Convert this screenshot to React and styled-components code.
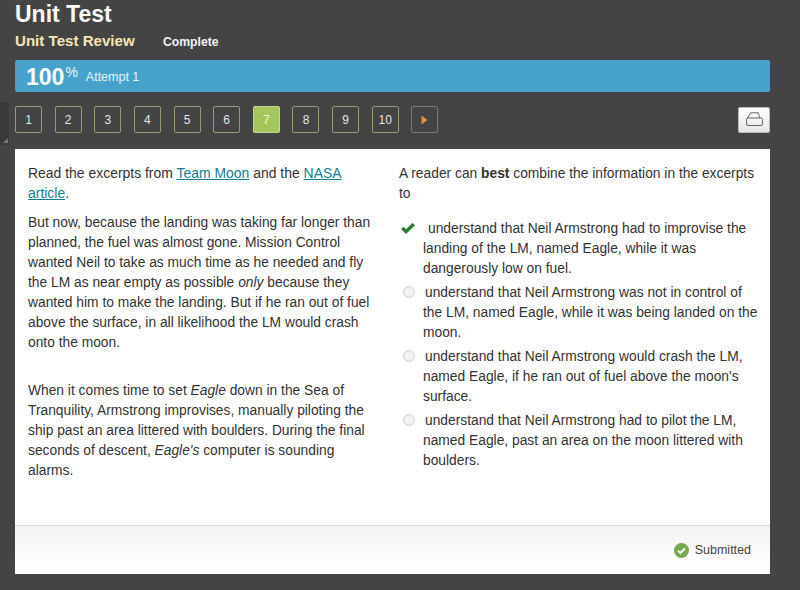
import React from "react";
import styled, { createGlobalStyle } from "styled-components";

const GlobalStyle = createGlobalStyle`
html, body {
  margin: 0;
  padding: 0;
  background: #444444;
  font-family: "Liberation Sans", Arial, sans-serif;
}
`;

const Page = styled.div`
position: relative;
width: 800px;
height: 590px;
box-sizing: border-box;
padding: 0 30px 0 15px;
overflow: hidden;
`;

const Title = styled.h1`
margin: 0;
padding-top: 1px;
height: 27px;
font-size: 23px;
line-height: 27px;
font-weight: bold;
color: #fff;
`;

const SubRow = styled.div`
display: flex;
align-items: center;
height: 27px;
margin-top: -1px;
`;

const Lesson = styled.div`
font-size: 15.1px;
font-weight: bold;
color: #f5e6b5;
width: 148px;
`;

const Status = styled.div`
font-size: 12.2px;
font-weight: bold;
color: #f2f2f2;
padding-top: 2px;
`;

const ScoreBar = styled.div`
display: flex;
align-items: center;
height: 32px;
margin-top: 6px;
padding-left: 11px;
background: #46a2ca;
border-radius: 2px;
color: #e6f3f9;
`;

const Score = styled.span`
font-size: 23px;
font-weight: bold;
color: #fff;
padding-top: 2px;
`;

const Percent = styled.span`
font-size: 14px;
position: relative;
top: -4px;
margin-left: 1px;
`;

const Attempt = styled.span`
margin-left: 8px;
font-size: 12.5px;
padding-top: 1px;
`;

const NavRow = styled.div`
display: flex;
align-items: center;
height: 27px;
margin-top: 14px;
`;

const NavButton = styled.div`
box-sizing: border-box;
display: flex;
align-items: center;
justify-content: center;
flex: none;
width: 27px;
height: 27px;
margin-right: 12.65px;
border-radius: 2px;
border: 1px ${(p) => (p.$active ? "dotted #dfe8c8" : "solid #959a72")};
background: ${(p) => (p.$active ? "#a4c65c" : "transparent")};
color: ${(p) => (p.$active ? "#eef3dc" : "#e4e4e4")};
font-size: 12px;
`;

const NextButton = styled(NavButton)`
border-color: #7b7b7b;
margin-right: 0;
`;

const PrintButton = styled.div`
box-sizing: border-box;
display: flex;
align-items: center;
justify-content: center;
margin-left: auto;
width: 32px;
height: 26px;
border-radius: 2px;
border: 1px solid #bbb;
background: linear-gradient(#ffffff, #e6e6e6);
`;

const ResizeTab = styled.div`
position: absolute;
left: 0;
top: 102px;
width: 9px;
height: 43px;
background: #3a3a3a;
&::after {
  content: "";
  position: absolute;
  right: 1px;
  bottom: 2px;
  border-style: solid;
  border-width: 0 0 5px 5px;
  border-color: transparent transparent #777 transparent;
}
`;

const Card = styled.div`
display: flex;
flex-direction: column;
height: 425px;
margin-top: 16px;
background: #fff;
`;

const Columns = styled.div`
display: flex;
flex: 1;
color: #333;
font-size: 13.8px;
line-height: 20px;
`;

const LeftColumn = styled.div`
width: 371px;
flex: none;
box-sizing: border-box;
padding: 14px 0 0 13px;
`;

const RightColumn = styled.div`
flex: 1;
box-sizing: border-box;
padding: 15px 12px 0 13px;
`;

const Paragraph = styled.p`
margin: 0 0 10px;
width: 345px;
font-size: ${(p) => p.$size || "13.8px"};
&:last-child { margin-bottom: 0; }
`;

const Passage = styled(Paragraph)`
margin-bottom: 28px;
`;

const Link = styled.a`
color: #117f94;
text-decoration: underline;
`;

const Question = styled.p`
margin: 0 0 15px;
`;

const Choices = styled.div`
display: flex;
flex-direction: column;
gap: 4px;
`;

const Choice = styled.div`
position: relative;
padding-left: 24px;
width: 335px;
`;

const ChoiceMark = styled.span`
display: inline-block;
width: ${(p) => (p.$correct ? "5px" : "2px")};
`;

const Radio = styled.span`
position: absolute;
left: 4px;
top: 3px;
box-sizing: border-box;
width: 12px;
height: 12px;
border-radius: 50%;
border: 1px solid #d0d0d0;
background: #f2f2f2;
`;

const Check = styled.svg`
position: absolute;
left: 1px;
top: 3px;
`;

const Footer = styled.div`
display: flex;
align-items: center;
justify-content: flex-end;
height: 48px;
padding-right: 19px;
border-top: 1px solid #dcdcdc;
background: linear-gradient(#f3f3f3, #fdfdfd 70%);
font-size: 12.5px;
color: #444;
`;

const SubmittedIcon = styled.svg`
margin-right: 6px;
`;

const choices = [
  "understand that Neil Armstrong had to improvise the landing of the LM, named Eagle, while it was dangerously low on fuel.",
  "understand that Neil Armstrong was not in control of the LM, named Eagle, while it was being landed on the moon.",
  "understand that Neil Armstrong would crash the LM, named Eagle, if he ran out of fuel above the moon's surface.",
  "understand that Neil Armstrong had to pilot the LM, named Eagle, past an area on the moon littered with boulders.",
];

const App = () => {
  return (
    <Page>
      <GlobalStyle />
      <ResizeTab />
      <Title>Unit Test</Title>
      <SubRow>
        <Lesson>Unit Test Review</Lesson>
        <Status>Complete</Status>
      </SubRow>
      <ScoreBar>
        <Score>100</Score>
        <Percent>%</Percent>
        <Attempt>Attempt 1</Attempt>
      </ScoreBar>
      <NavRow>
        {[1, 2, 3, 4, 5, 6, 7, 8, 9, 10].map((n) => (
          <NavButton key={n} $active={n === 7}>{n}</NavButton>
        ))}
        <NextButton>
          <svg width="7" height="10" viewBox="0 0 7 10">
            <path d="M0.5 0.5 L6.5 5 L0.5 9.5 Z" fill="#e58e3c" />
          </svg>
        </NextButton>
        <PrintButton>
          <svg width="20" height="15" viewBox="0 0 20 15" fill="none" stroke="#666" strokeWidth="1">
            <path d="M3.5 6 L6.8 0.8 H14.2 L15.8 6" />
            <rect x="2.5" y="6" width="16" height="7.5" rx="1.5" />
          </svg>
        </PrintButton>
      </NavRow>
      <Card>
        <Columns>
          <LeftColumn>
            <Paragraph $size="13.95px">
              Read the excerpts from <Link>Team Moon</Link> and the <Link>NASA article</Link>.
            </Paragraph>
            <Passage>
              But now, because the landing was taking far longer than planned, the fuel was almost gone. Mission Control wanted Neil to take as much time as he needed and fly the LM as near empty as possible <em>only</em> because they wanted him to make the landing. But if he ran out of fuel above the surface, in all likelihood the LM would crash onto the moon.
            </Passage>
            <Paragraph>
              When it comes time to set <em>Eagle</em> down in the Sea of Tranquility, Armstrong improvises, manually piloting the ship past an area littered with boulders. During the final seconds of descent, <em>Eagle's</em> computer is sounding alarms.
            </Paragraph>
          </LeftColumn>
          <RightColumn>
            <Question>
              A reader can <strong>best</strong> combine the information in the excerpts to
            </Question>
            <Choices>
              {choices.map((text, i) => (
                <Choice key={i}>
                  {i === 0 ? (
                    <Check width="16" height="13" viewBox="0 0 16 13">
                      <path d="M1 7 L3.5 4.8 L6 7.3 L12.5 1 L15 3.2 L6 12 Z" fill="#2a7d2e" />
                    </Check>
                  ) : (
                    <Radio />
                  )}
                  <ChoiceMark $correct={i === 0} />
                  {text}
                </Choice>
              ))}
            </Choices>
          </RightColumn>
        </Columns>
        <Footer>
          <SubmittedIcon width="15" height="15" viewBox="0 0 15 15">
            <circle cx="7.5" cy="7.5" r="7.5" fill="#74a94f" />
            <path d="M4 7.8 L6.5 10 L11 5.4" fill="none" stroke="#fff" strokeWidth="2" />
          </SubmittedIcon>
          Submitted
        </Footer>
      </Card>
    </Page>
  );
};

export default App;
